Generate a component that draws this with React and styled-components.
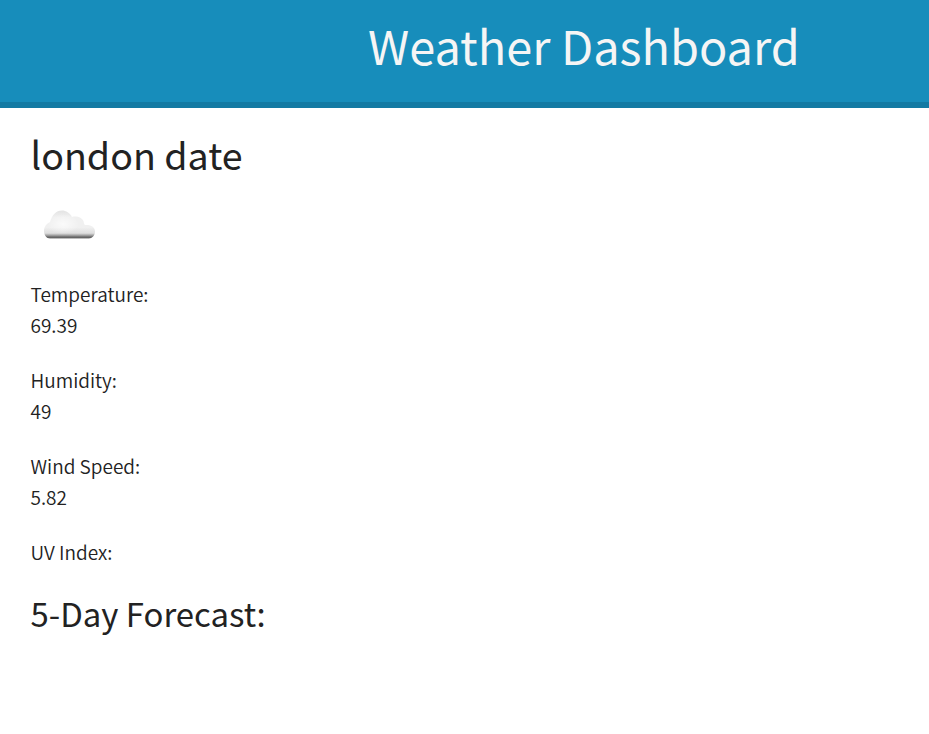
import React from "react";
import styled, { createGlobalStyle } from "styled-components";

const GlobalStyle = createGlobalStyle`
  * { box-sizing: border-box; }
  body {
    margin: 0;
    background: #fff;
    color: #222;
    font-family: "Noto Sans CJK SC", "Noto Sans", sans-serif;
    font-weight: 400;
  }
  h1, h2, h3, p { margin: 0; font-weight: 400; white-space: nowrap; }
`;

const Header = styled.header`
  height: 108px;
  padding: 10px 0 0 368px;
  background: #178dbb;
  border-bottom: 6px solid #137aa3;
`;

const Title = styled.h1`
  color: #f5f5f5;
  font-size: 46.9px;
  line-height: 70px;
`;

const Main = styled.main`
  padding: 10px 30.5px 0;
`;

const City = styled.h2`
  font-size: 37.6px;
  line-height: 72px;
  margin-bottom: 10px;
`;

const CloudIcon = styled.svg`
  display: block;
  width: 80px;
  height: 80px;
  margin: 0 0 -2px -1px;
`;

const Reading = styled.p`
  margin-bottom: 24px;
  font-size: 19px;
  font-weight: 350;
  line-height: 31px;
`;

const Value = styled.span`
  display: block;
`;

const Forecast = styled.h3`
  margin-top: -3px;
  font-size: 32.9px;
  line-height: 50px;
`;

const readings = [
  { label: "Temperature:", value: "69.39" },
  { label: "Humidity:", value: "49" },
  { label: "Wind Speed:", value: "5.82" },
  { label: "UV Index:" },
];

function Cloud() {
  return (
    <CloudIcon viewBox="0 0 80 80" role="img" aria-label="Cloudy">
      <defs>
        <linearGradient id="cloud" x1="0" y1="10" x2="0" y2="39" gradientUnits="userSpaceOnUse">
          <stop offset="0" stopColor="#e2e2e2" />
          <stop offset="0.25" stopColor="#f0f0f0" />
          <stop offset="0.6" stopColor="#f0f0f0" />
          <stop offset="0.8" stopColor="#dedede" />
          <stop offset="0.87" stopColor="#a5a5a5" />
          <stop offset="0.94" stopColor="#606060" />
          <stop offset="1" stopColor="#858585" />
        </linearGradient>
        <radialGradient id="shine">
          <stop offset="0" stopColor="#fff" stopOpacity="0.7" />
          <stop offset="1" stopColor="#fff" stopOpacity="0" />
        </radialGradient>
        <filter id="soft" x="-10%" y="-10%" width="120%" height="120%">
          <feGaussianBlur stdDeviation="0.7" />
        </filter>
      </defs>
      <path
        filter="url(#soft)"
        fill="url(#cloud)"
        d="M20 38.5C16.5 38.5 14 35 14 31C14 27 16.5 23.5 20 22C22 15 26 10.5 32 10.5C36 10.5 40 13 42 17C47 15.5 52 17.5 53.5 21C54 23 54 24.5 55 25C61 24.5 65 27 65 31.5C65 35.5 62 38.5 59 38.5Z"
      />
      <ellipse cx="33" cy="24" rx="16" ry="10" fill="url(#shine)" />
    </CloudIcon>
  );
}

export default function App() {
  return (
    <>
      <GlobalStyle />
      <Header>
        <Title>Weather Dashboard</Title>
      </Header>
      <Main>
        <City>london date</City>
        <Cloud />
        {readings.map(({ label, value }) => (
          <Reading key={label}>
            {label}
            {value && <Value>{value}</Value>}
          </Reading>
        ))}
        <Forecast>5-Day Forecast:</Forecast>
      </Main>
    </>
  );
}
